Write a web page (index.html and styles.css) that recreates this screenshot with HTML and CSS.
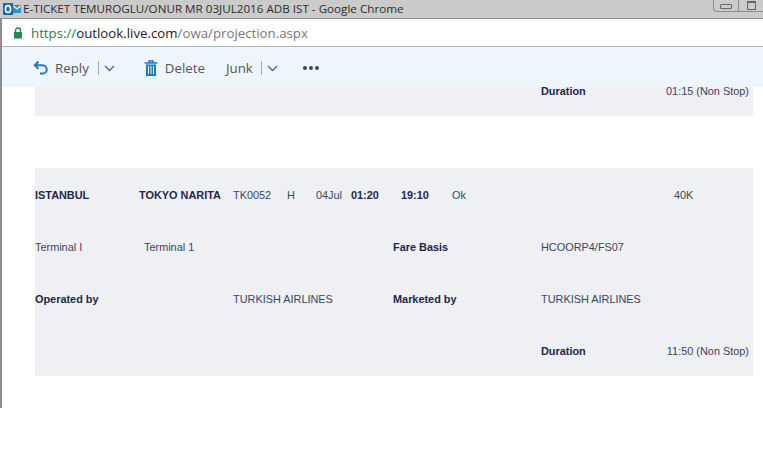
FILE: index.html
```html
<!DOCTYPE html>
<html>
<head>
    <title>E-TICKET</title>
    <link rel="stylesheet" href="styles.css">
</head>
<body>
    <div class="titlebar">
        <svg class="app-icon" width="20" height="14" viewBox="0 0 20 14">
            <rect x="0" y="1" width="10" height="12" fill="#0f6cb6"/>
            <ellipse cx="5" cy="7" rx="2.6" ry="3.4" fill="none" stroke="#fff" stroke-width="1.6"/>
            <rect x="10" y="3" width="8" height="8" fill="#2d8fd8"/>
            <path d="M10.5 4l3.5 3 3.5-3" fill="none" stroke="#fff" stroke-width="1.2"/>
        </svg>
        <span class="title-text">E-TICKET TEMUROGLU/ONUR MR 03JUL2016 ADB IST - Google Chrome</span>
        <div class="win-btns">
            <div class="win-btn"><span class="win-min"></span></div>
            <div class="win-btn"><span class="win-max"></span></div>
            <div class="win-btn"></div>
        </div>
    </div>
    <div class="window">
        <div class="addressbar">
            <svg width="10" height="12" viewBox="0 0 10 12">
                <path d="M2.5 5V3.5a2.5 2.5 0 0 1 5 0V5" fill="none" stroke="#1e8a4c" stroke-width="1.4"/>
                <rect x="1" y="5" width="8" height="6.5" rx="0.6" fill="#1e8a4c"/>
            </svg>
            <span class="url"><span class="url-scheme">https://</span><span class="url-host">outlook.live.com</span>/owa/projection.aspx</span>
        </div>
        <div class="toolbar">
            <div class="tool tool-reply">
                <svg width="16" height="16" viewBox="0 0 16 16">
                    <path d="M5.500 1.500L1.800 5.200l3.700 3.700M2 5.200h7.500a4.200 4.200 0 0 1 0 8.400H7" fill="none" stroke="#1f78c8" stroke-width="2"/>
                </svg>
                <span class="tool-label">Reply</span>
                <span class="tool-sep"></span>
                <svg class="chev" width="11" height="7" viewBox="0 0 11 7"><path d="M1 1l4.500 4.500L10 1" fill="none" stroke="#5c6670" stroke-width="1.300"/></svg>
            </div>
            <div class="tool tool-delete">
                <svg width="14" height="16" viewBox="0 0 14 16">
                    <path d="M0.500 3h13M5 3V1h4v2" fill="none" stroke="#1f78c8" stroke-width="1.400"/>
                    <path d="M2 4.500h10V16H2z" fill="#1f78c8"/>
                    <path d="M4.500 6v8M7 6v8M9.500 6v8" stroke="#eef5fb" stroke-width="1"/>
                </svg>
                <span class="tool-label">Delete</span>
            </div>
            <div class="tool tool-junk">
                <span class="tool-label">Junk</span>
                <span class="tool-sep"></span>
                <svg class="chev" width="11" height="7" viewBox="0 0 11 7"><path d="M1 1l4.500 4.500L10 1" fill="none" stroke="#5c6670" stroke-width="1.300"/></svg>
            </div>
            <div class="tool-more"><i></i><i></i><i></i></div>
        </div>
        <div class="content">
            <div class="band band-cut">
                <div class="row row-cut">
                    <b class="c-duration">Duration</b>
                    <span class="c-end">01:15 (Non Stop)</span>
                </div>
            </div>
            <div class="band">
                <div class="row">
                    <b class="c-from">ISTANBUL</b>
                    <b class="c-to">TOKYO NARITA</b>
                    <span class="c-flight">TK0052</span>
                    <span class="c-class">H</span>
                    <span class="c-date">04Jul</span>
                    <b class="c-dep">01:20</b>
                    <b class="c-arr">19:10</b>
                    <span class="c-status">Ok</span>
                    <span class="c-bag">40K</span>
                </div>
                <div class="row">
                    <span class="c-from">Terminal I</span>
                    <span class="c-to c-inset">Terminal 1</span>
                    <b class="c-label">Fare Basis</b>
                    <span class="c-duration">HCOORP4/FS07</span>
                </div>
                <div class="row">
                    <b class="c-from">Operated by</b>
                    <span class="c-flight-wide">TURKISH AIRLINES</span>
                    <b class="c-label">Marketed by</b>
                    <span class="c-duration">TURKISH AIRLINES</span>
                </div>
                <div class="row">
                    <b class="c-duration">Duration</b>
                    <span class="c-end">11:50 (Non Stop)</span>
                </div>
            </div>
        </div>
    </div>
</body>
</html>
```

FILE: styles.css
```css
html,
body {
    margin: 0;
    height: 476px;
    overflow: hidden;
    background-color: #fff;
}

.titlebar {
    display: flex;
    align-items: center;
    height: 18px;
    border-bottom: 1px solid #8c8c8c;
    background-color: #cbcbcb;
    font-family: "Open Sans", sans-serif;
    font-size: 11.65px;
    color: #2b2b2b;
}

.app-icon {
    margin-left: 3px;
    flex: none;
}

.title-text {
    margin-top: -2px;
    white-space: nowrap;
}

.win-btns {
    display: flex;
    flex: none;
    margin-left: auto;
    margin-top: -7px;
    margin-right: -27px;
    height: 12px;
    border: 1px solid #8c8c8c;
    border-top: none;
    border-radius: 0 0 0 4px;
}

.win-btn {
    display: flex;
    align-items: center;
    justify-content: center;
    width: 24px;
    border-right: 1px solid #8c8c8c;
}

.win-min {
    width: 10px;
    height: 3px;
    margin-top: 3px;
    border: 1px solid #666;
    border-radius: 1px;
}

.win-max {
    width: 7px;
    height: 6px;
    border: 1px solid #666;
    border-top-width: 2px;
}

.window {
    height: 389px;
    border-left: 2px solid #8f8f8f;
    overflow: hidden;
}

.addressbar {
    display: flex;
    align-items: center;
    gap: 7px;
    height: 27px;
    padding-left: 11px;
    border-bottom: 1px solid #b4b4b4;
    font-family: "Open Sans", sans-serif;
    font-size: 13.25px;
    color: #777;
}

.url {
    margin-left: 1px;
}

.url-scheme {
    color: #2e7d4f;
}

.url-host {
    color: #222;
}

.toolbar {
    display: flex;
    align-items: center;
    height: 38px;
    padding-top: 2px;
    padding-left: 31px;
    background-color: #eef5fb;
    font-family: "Open Sans", sans-serif;
    font-size: 13.3px;
    color: #555;
}

.tool {
    display: flex;
    align-items: center;
}

.tool-label {
    margin-left: 6px;
}

.tool-sep {
    width: 1px;
    height: 14px;
    margin: 0 5px 0 9px;
    background-color: #a5a9ad;
}

.tool-delete {
    margin-left: 29px;
}

.tool-delete .tool-label {
    margin-left: 7px;
}

.tool-junk {
    margin-left: 15px;
}

.tool-junk .tool-label {
    margin-left: 6px;
}

.tool-junk .tool-sep {
    margin: 0 5px 0 8px;
}

.tool-more {
    display: flex;
    gap: 2px;
    margin-left: 25px;
}

.tool-more i {
    width: 4px;
    height: 4px;
    border-radius: 50%;
    background-color: #3c4650;
}

.content {
    padding-left: 33px;
    width: 718px;
    font-family: "Liberation Sans", sans-serif;
    font-size: 10.9px;
    color: #3a4560;
}

.content b {
    color: #1d2748;
}

.band {
    width: 718px;
    background-color: #eff0f4;
}

.band-cut {
    margin-bottom: 52px;
}

.row {
    display: grid;
    grid-template-columns: 104px 94px 54px 29px 35px 42px 8px 51px 89px 133px 1fr;
    align-items: center;
    box-sizing: border-box;
    height: 52px;
    padding-top: 2px;
    white-space: nowrap;
}

.row-cut {
    height: 29px;
    padding-top: 0;
    align-items: start;
    line-height: 8px;
}

.row > * { grid-row: 1; }

.c-from { grid-column: 1; }
.c-to { grid-column: 2; }
.c-inset { padding-left: 5px; }
.c-flight { grid-column: 3; }
.c-flight-wide { grid-column: 3 / 6; }
.c-class { grid-column: 4; }
.c-date { grid-column: 5; }
.c-dep { grid-column: 6 / 8; }
.c-arr { grid-column: 8; }
.c-status { grid-column: 9; }
.c-label { grid-column: 7 / 10; }
.c-duration { grid-column: 10; }
.c-bag { grid-column: 11; }
.c-end {
    grid-column: 10 / 12;
    padding-right: 4px;
    text-align: right;
}
```
